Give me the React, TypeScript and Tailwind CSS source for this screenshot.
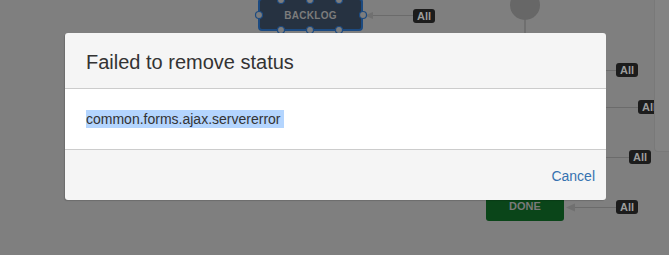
import React from "react";

function Badge({ x, y }: { x: number; y: number }) {
  return (
    <div
      className="absolute flex h-[14px] w-[22px] items-center justify-center rounded-[3px] bg-[#1c1c1c] text-[11px] font-bold leading-none text-[#9c9c9c]"
      style={{ left: x, top: y }}
    >
      All
    </div>
  );
}

const handles: [number, number][] = [
  [281, 0],
  [310, 0],
  [339, 0],
  [281, 30],
  [310, 30],
  [339, 30],
  [259, 15],
  [363, 15],
];

export default function App() {
  return (
    <div className="relative h-[255px] w-[669px] overflow-hidden bg-[#7f7f7f] font-['Liberation_Sans',Arial,sans-serif]">
      {/* workflow canvas behind the blanket */}
      <svg className="absolute left-0 top-0" width="669" height="255">
        <circle cx="525" cy="5" r="15" fill="#676767" />
        <line x1="525" y1="20" x2="525" y2="34" stroke="#6a6a6a" strokeWidth="1.5" />
        <line x1="372" y1="15.5" x2="413" y2="15.5" stroke="#6b6b6b" strokeWidth="1" />
        <polygon points="365,15.5 373,12 373,19" fill="#707070" />
        <line x1="606" y1="70.5" x2="616" y2="70.5" stroke="#6b6b6b" strokeWidth="1" />
        <line x1="606" y1="107.5" x2="638" y2="107.5" stroke="#6b6b6b" strokeWidth="1" />
        <line x1="606" y1="157.5" x2="629" y2="157.5" stroke="#6b6b6b" strokeWidth="1" />
        <line x1="574" y1="207.5" x2="616" y2="207.5" stroke="#6b6b6b" strokeWidth="1" />
        <polygon points="566,207.5 575,203.5 575,211.5" fill="#707070" />
      </svg>

      <div className="absolute left-[258px] top-[-2px] flex h-[33px] w-[105px] items-center justify-center rounded-[4px] border-2 border-[#1c4a80] bg-[#263241] pt-[2px] text-[10px] font-bold tracking-[0.3px] text-[#7c7c7c]">
        BACKLOG
      </div>
      <svg className="absolute left-0 top-0" width="669" height="40">
        {handles.map(([cx, cy], i) => (
          <circle key={i} cx={cx} cy={cy} r="3.5" fill="#7d7d7d" stroke="#1c4a80" strokeWidth="1.2" />
        ))}
      </svg>
      <Badge x={413} y={9} />

      <div className="absolute left-[486px] top-[190px] flex h-[31px] w-[78px] items-end justify-center rounded-[3px] bg-[#0a4519] pb-[7px] text-[11px] font-bold text-[#7a7a7a]">
        DONE
      </div>

      <Badge x={616} y={63} />
      <Badge x={638} y={100} />
      <Badge x={629} y={150} />
      <Badge x={616} y={200} />

      <div className="absolute left-[654px] top-[-4px] h-[156px] w-[30px] rounded-bl-[4px] border-b border-l border-[#797979] bg-[#838383]" />

      {/* dialog */}
      <div className="absolute left-[65px] top-[33px] flex w-[541px] flex-col overflow-hidden rounded-[3px] bg-[#f5f5f5] shadow-[-1px_1px_1px_rgba(0,0,0,0.15)]">
        <div className="flex h-[56px] items-center border-b border-[#cccccc] px-[21px] pt-[2px]">
          <h2 className="text-[20px] font-normal text-[#333333]">Failed to remove status</h2>
        </div>
        <div className="flex h-[61px] items-center border-b border-[#cccccc] bg-white px-[21px]">
          <p className="bg-[#b4d5fe] text-[14px] leading-[18px] text-[#333333]">common.forms.ajax.servererror&nbsp;</p>
        </div>
        <div className="flex h-[50px] items-center justify-end px-[11px] pt-[2px]">
          <button className="text-[14px] text-[#3572b0]">Cancel</button>
        </div>
      </div>
    </div>
  );
}
